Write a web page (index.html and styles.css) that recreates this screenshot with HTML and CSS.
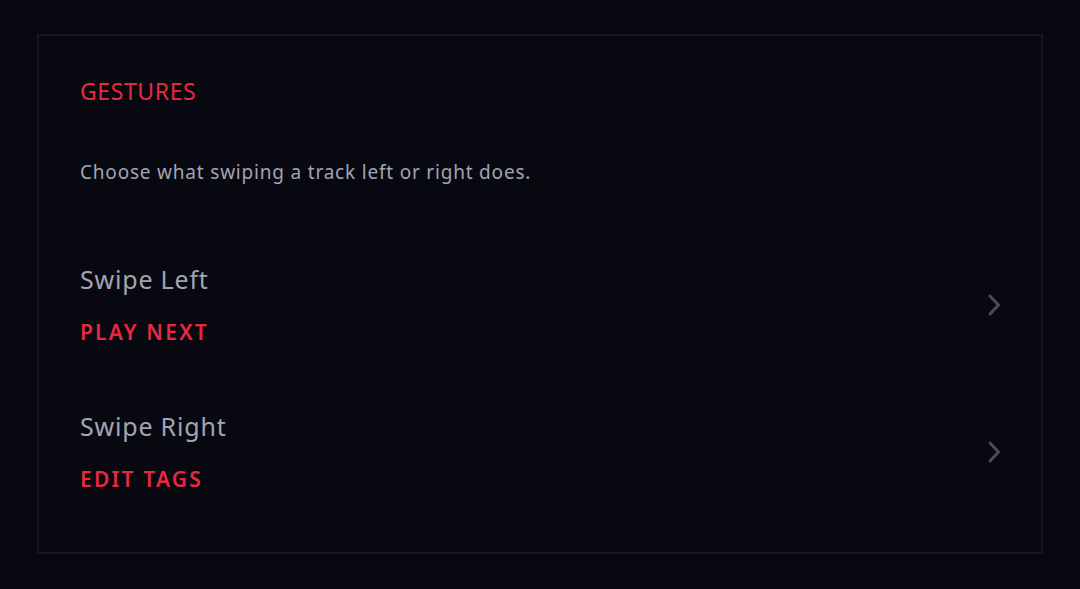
FILE: index.html
```html
<!DOCTYPE html>
<html lang="en">
<head>
  <meta charset="UTF-8" />
  <title>Gestures</title>
  <link rel="stylesheet" href="styles.css">
</head>
<body>
<div class="page">
  <div class="card">
    <h3 class="section-title">GESTURES</h3>
    <p class="section-desc">Choose what swiping a track left or right does.</p>
    <!-- Swipe options -->
    <div class="options">
      <div class="option-row">
        <div class="option-text">
          <div class="option-label">Swipe Left</div>
          <div class="option-value">PLAY NEXT</div>
        </div>
        <svg class="chevron" viewBox="0 0 24 24" width="24" height="24"><path d="M10 3l8.5 9-8.5 9" /></svg>
      </div>
      <div class="option-row">
        <div class="option-text">
          <div class="option-label">Swipe Right</div>
          <div class="option-value">EDIT TAGS</div>
        </div>
        <svg class="chevron" viewBox="0 0 24 24" width="24" height="24"><path d="M10 3l8.5 9-8.5 9" /></svg>
      </div>
    </div>
  </div>
</div>
</body>
</html>
```

FILE: styles.css
```css
body {
  margin: 0;
  background: #080910;
  font-family: 'Noto Sans', sans-serif;
}
.page {
  padding: 34px 37px;
}
.card {
  border: 2px solid #161722;
  padding: 41px 37px 42px 41px;
  height: 520px;
  box-sizing: border-box;
}
.section-title {
  margin: 0;
  color: #e8283f;
  font-size: 23px;
  font-weight: 400;
  letter-spacing: 0.6px;
  line-height: 28px;
}
.section-desc {
  margin: 55px 0 0;
  color: #a3a4b2;
  font-size: 19px;
  letter-spacing: 0.8px;
  line-height: 24px;
}
.options {
  margin-top: 47px;
}
.option-row {
  display: flex;
  align-items: center;
  justify-content: space-between;
  height: 147px;
}
.option-text {
  display: flex;
  flex-direction: column;
  gap: 25px;
}
.option-label {
  color: #a3a4b2;
  font-size: 25px;
  letter-spacing: 0.8px;
  line-height: 30px;
}
.option-value {
  color: #e8283f;
  font-size: 21px;
  font-weight: 600;
  letter-spacing: 2.2px;
  line-height: 26px;
}
.chevron {
  fill: none;
  stroke: #4a4b57;
  stroke-width: 3;
  stroke-linecap: round;
  stroke-linejoin: round;
}
```
